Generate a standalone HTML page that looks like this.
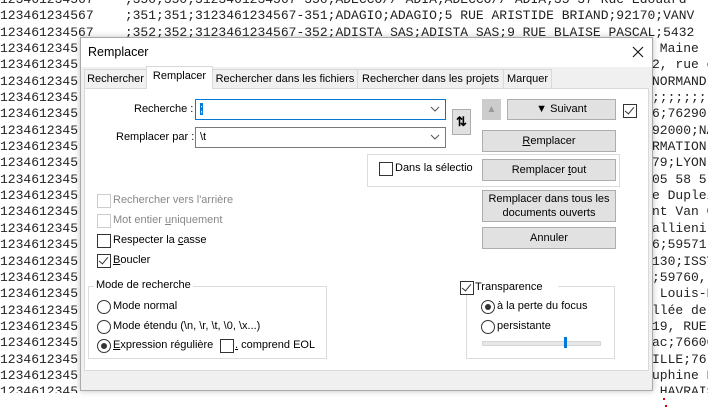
<!DOCTYPE html>
<html><head><meta charset="utf-8"><style>
body{margin:0;width:708px;height:413px;overflow:hidden;background:#fff;position:relative;font-family:"Liberation Sans",sans-serif;font-size:11px;color:#000}
.bg{position:absolute;top:-8px;font-family:"Liberation Mono",monospace;font-size:13px;line-height:16.35px;white-space:pre;color:#222}
.a{position:absolute}
.dlg{position:absolute;left:80px;top:37px;width:571px;height:352px;background:#f0f0f0;border:1px solid #aaa;box-shadow:0 0 6px rgba(0,0,0,.25)}
.tb{position:absolute;left:0;top:0;width:571px;height:29px;background:#fff}
.tab{position:absolute;top:31px;height:19px;border:1px solid #d9d9d9;background:#f0f0f0;line-height:19px;text-align:center;white-space:nowrap;overflow:hidden}
.panel{position:absolute;left:3px;top:50px;width:563px;height:281px;background:#fff;border:1px solid #d9d9d9}
.btn{position:absolute;background:#e1e1e1;border:1px solid #adadad;text-align:center;box-sizing:border-box;white-space:nowrap}
.inp{position:absolute;background:#fff;border:1px solid #7a7a7a;box-sizing:border-box;height:21px;line-height:19px;padding-left:4px}
.cb{position:absolute;width:12px;height:12px;border:1px solid #333;background:#fff}
.cb.d{border-color:#ccc}
.rd{position:absolute;width:12px;height:12px;border:1px solid #333;border-radius:50%;background:#fff}
.rd.on::after{content:"";position:absolute;left:3px;top:3px;width:6px;height:6px;border-radius:50%;background:#333}
.lbl{position:absolute;white-space:nowrap}
.grp{position:absolute;border:1px solid #dcdcdc}
.chk::after{content:"";position:absolute;left:3px;top:0px;width:4px;height:8px;border:solid #333;border-width:0 1.3px 1.3px 0;transform:rotate(40deg)}
</style></head><body>
<div class="bg" style="left:0">123461234567    ;350;350;3123461234567-350;ADECCO// ADIA;ADECCO// ADIA;35-37 Rue Edouard
123461234567    ;351;351;3123461234567-351;ADAGIO;ADAGIO;5 RUE ARISTIDE BRIAND;92170;VANV
123461234567    ;352;352;3123461234567-352;ADISTA SAS;ADISTA SAS;9 RUE BLAISE PASCAL;5432
1234612345
1234612345
1234612345
1234612345
1234612345
1234612345
1234612345
1234612345
1234612345
1234612345
1234612345
1234612345
1234612345
1234612345
1234612345
1234612345
1234612345
1234612345
1234612345
1234612345
1234612345
1234612345</div>
<div class="bg" style="left:652px;top:-8px"> 


 Maine l
2, rue c
NORMANDI
;;;;;;;.
6;76290,
92000;NA
RMATION
79;LYON,
05 58 5
e Dupleix
nt Van C
allieni,
6;59571,
130;ISSY
;59760,
 Louis-B
llée de
19, RUE
ac;76600
ILLE;76
uphine B
 HAVRAIS</div>
<div class="a" style="left:0;top:393px;width:708px;height:20px;background:#fff"></div>
<div class="a" style="left:663px;top:398px;width:2px;height:2px;background:#d00"></div>
<div class="a" style="left:665px;top:405px;width:2px;height:2px;background:#d00"></div>
<div class="dlg">
<div class="tb"><span class="lbl" style="left:7px;top:7px;font-size:12.5px">Remplacer</span>
<svg class="a" style="left:551px;top:8px" width="12" height="12"><path d="M1 1L11 11M11 1L1 11" stroke="#111" stroke-width="1.1"/></svg></div>
<div class="tab" style="left:3px;width:61px">Rechercher</div>
<div class="tab" style="left:131px;width:144px">Rechercher dans les fichiers</div>
<div class="tab" style="left:276px;width:145px">Rechercher dans les projets</div>
<div class="tab" style="left:422px;width:47px">Marquer</div>
<div class="panel"></div>
<div class="tab" style="left:65px;width:65px;top:28px;height:22px;background:#fff;border-bottom:none">Remplacer</div>
</div>
<div class="lbl" style="left:134px;top:103px">Recherche :</div>
<div class="inp" style="left:195px;top:99px;width:251px;border-color:#0078d7"><span style="background:#0078d7;color:#fff">;</span></div>
<div class="lbl" style="left:116px;top:131px">Remplacer par :</div>
<div class="inp" style="left:195px;top:127px;width:251px">\t</div>
<svg class="a" style="left:430px;top:105px" width="10" height="8"><path d="M1 2L5 6L9 2" stroke="#555" fill="none"/></svg>
<svg class="a" style="left:430px;top:133px" width="10" height="8"><path d="M1 2L5 6L9 2" stroke="#555" fill="none"/></svg>
<div class="btn" style="left:452px;top:109px;width:19px;height:26px;line-height:24px;font-weight:bold;font-size:13px">⇅</div>
<div class="btn" style="left:482px;top:99px;width:19px;height:21px;line-height:19px;color:#999;background:#ccc;border-color:#ccc;font-size:10px">▲</div>
<div class="btn" style="left:507px;top:99px;width:109px;height:21px;line-height:19px">▼ Suivant</div>
<div class="cb chk" style="left:623px;top:104px"></div>
<div class="btn" style="left:482px;top:130px;width:134px;height:22px;line-height:20px"><u>R</u>emplacer</div>
<div class="grp" style="left:367px;top:154px;width:251px;height:31px"></div>
<div class="cb" style="left:379px;top:162px"></div>
<div class="lbl" style="left:395px;top:162px">Dans la sélectio</div>
<div class="btn" style="left:482px;top:159px;width:134px;height:22px;line-height:20px">Remplacer <u>t</u>out</div>
<div class="btn" style="left:482px;top:190px;width:134px;height:32px;line-height:14px;padding-top:1px;white-space:normal">Remplacer dans tous les documents ouverts</div>
<div class="btn" style="left:482px;top:227px;width:134px;height:22px;line-height:20px">Annuler</div>
<div class="cb d" style="left:97px;top:194px"></div><div class="lbl" style="left:113px;top:194px;color:#888">Rechercher vers l'arrière</div>
<div class="cb d" style="left:97px;top:214px"></div><div class="lbl" style="left:113px;top:214px;color:#888">Mot entier <u>u</u>niquement</div>
<div class="cb" style="left:97px;top:234px"></div><div class="lbl" style="left:113px;top:234px">Respecter la <u>c</u>asse</div>
<div class="cb chk" style="left:97px;top:254px"></div><div class="lbl" style="left:113px;top:254px"><u>B</u>oucler</div>
<div class="grp" style="left:88px;top:286px;width:237px;height:71px"></div>
<div class="lbl" style="left:94px;top:279px;background:#fff;padding:0 2px">Mode de recherche</div>
<div class="rd" style="left:97px;top:300px"></div><div class="lbl" style="left:113px;top:300px">Mode normal</div>
<div class="rd" style="left:97px;top:320px"></div><div class="lbl" style="left:113px;top:320px">Mode étendu (\n, \r, \t, \0, \x...)</div>
<div class="rd on" style="left:97px;top:339px"></div><div class="lbl" style="left:113px;top:339px"><u>E</u>xpression régulière</div>
<div class="cb" style="left:220px;top:339px"></div><div class="lbl" style="left:235px;top:339px"><u>.</u> comprend EOL</div>
<div class="grp" style="left:466px;top:286px;width:147px;height:71px"></div>
<div class="a" style="left:458px;top:280px;width:100px;height:14px;background:#fff"></div>
<div class="cb chk" style="left:460px;top:281px"></div><div class="lbl" style="left:475px;top:281px">Transparence</div>
<div class="rd on" style="left:481px;top:300px"></div><div class="lbl" style="left:497px;top:300px">à la perte du focus</div>
<div class="rd" style="left:481px;top:320px"></div><div class="lbl" style="left:497px;top:320px">persistante</div>
<div class="a" style="left:482px;top:341px;width:117px;height:3px;background:#e7e7e7;border:1px solid #d6d6d6"></div>
<div class="a" style="left:564px;top:337px;width:3px;height:11px;background:#0078d7"></div>
</body></html>
